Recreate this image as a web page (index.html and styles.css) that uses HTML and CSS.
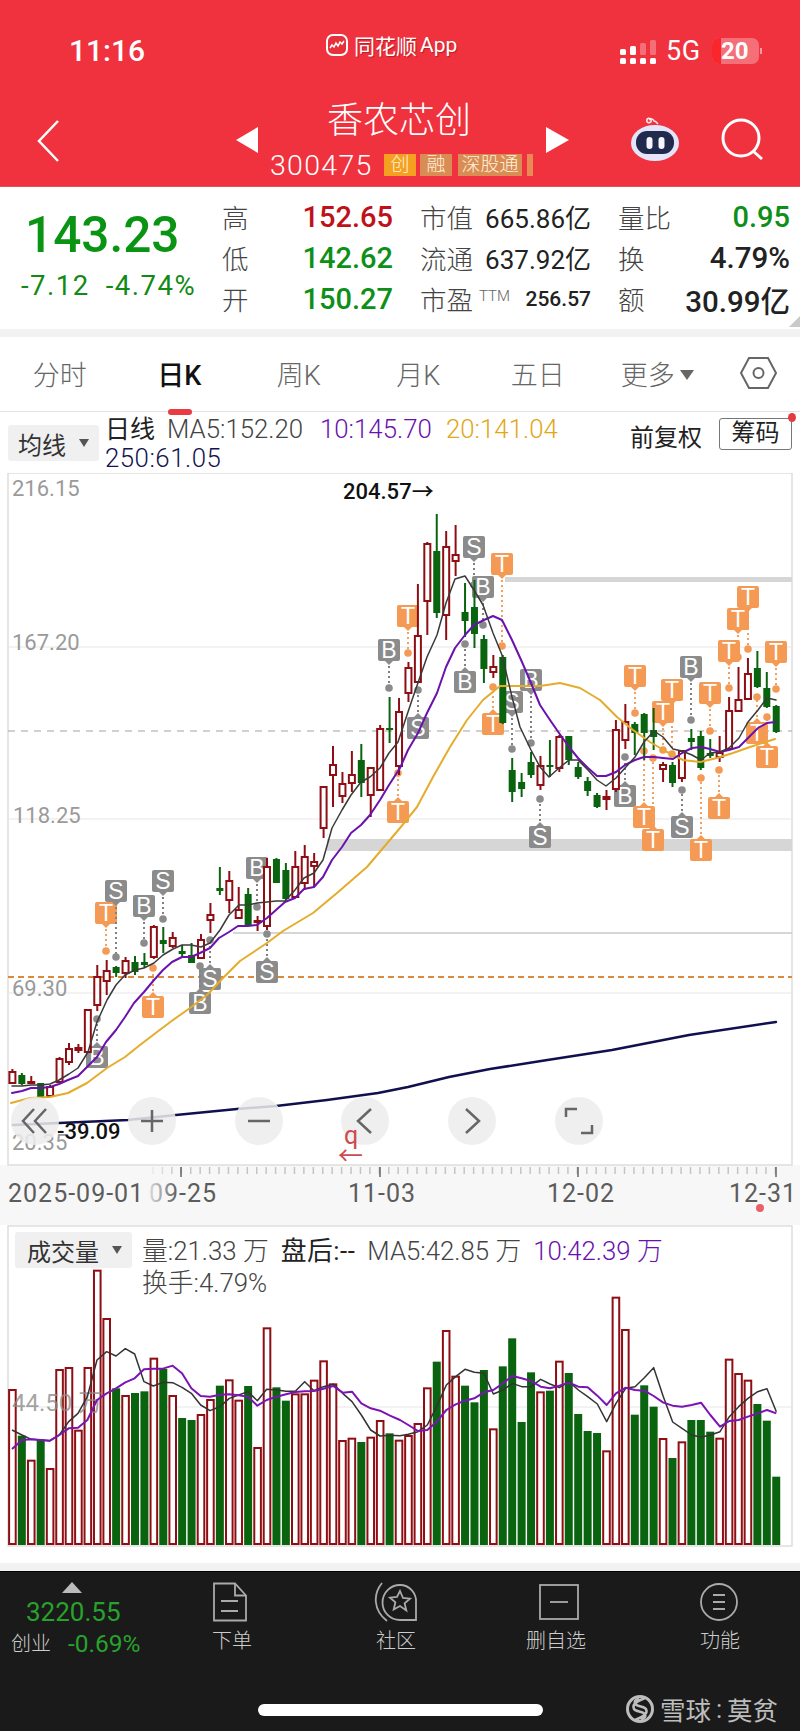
FILE: index.html
```html
<!DOCTYPE html>
<html lang="zh-CN">
<head>
<meta charset="utf-8">
<title>香农芯创</title>
<link rel="stylesheet" href="styles.css">
</head>
<body>
<div class="screen">
  <header class="top">
    <div class="status">
      <div class="time">11:16</div>
      <div class="app">
        <svg class="app-logo" width="22" height="22" viewBox="0 0 22 22"><rect x="1" y="1" width="20" height="20" rx="6" class="logo-box"/><path d="M4 14l2-3 2 2 2-4 2 3 2-4 2 2 2-3" class="logo-wave"/></svg>
        <span>同花顺</span><span class="app-en">App</span>
      </div>
      <div class="sys">
        <svg width="38" height="28" viewBox="0 0 38 28"><g class="sig"><rect x="0" y="12" width="6" height="6" rx="1.5"/><rect x="10" y="9" width="6" height="9" rx="1.5"/><rect class="faint" x="20" y="6" width="6" height="12" rx="1.5"/><rect class="faint" x="30" y="3" width="6" height="15" rx="1.5"/><rect x="0" y="21" width="6" height="6" rx="1.5"/><rect x="10" y="21" width="6" height="6" rx="1.5"/><rect x="20" y="21" width="6" height="6" rx="1.5"/><rect x="30" y="21" width="6" height="6" rx="1.5"/></g></svg>
        <span class="net">5G</span>
        <div class="batt"><span class="batt-low"></span><span class="batt-num">20</span></div>
        <span class="batt-nub"></span>
      </div>
    </div>
    <nav class="nav">
      <div class="back"><svg width="24" height="42" viewBox="0 0 24 42"><path d="M21 1L2 21l19 20" class="thin"/></svg></div>
      <div class="stock">
        <span class="tri-l"></span>
        <div class="stock-mid">
          <div class="title">香农芯创</div>
          <div class="code-row">
            <span class="code">300475</span>
            <span class="tag tag-a">创</span>
            <span class="tag tag-b">融</span>
            <span class="tag tag-b tag-w">深股通</span>
            <span class="tag-end"></span>
          </div>
        </div>
        <span class="tri-r"></span>
      </div>
      <svg class="robot" width="52" height="46" viewBox="0 0 52 46">
        <path d="M20 3a3 3 0 0 1 5 1c2 0 3 2 4 3" class="ant"/>
        <ellipse cx="26" cy="26" rx="24" ry="18" class="head"/>
        <circle cx="20" cy="3.500" r="2.200" class="antd"/>
        <rect x="7" y="14" width="38" height="23" rx="11" class="face"/>
        <rect x="17.500" y="20" width="6" height="12" rx="3" class="eye"/>
        <rect x="29.500" y="20" width="6" height="12" rx="3" class="eye"/>
      </svg>
      <svg class="search" width="44" height="44" viewBox="0 0 44 44"><circle cx="20" cy="20" r="18" class="thick"/><path d="M32 33l9 8" class="thick"/></svg>
    </nav>
  </header>

  <section class="quote">
    <div class="last">
      <div class="price">143.23</div>
      <div class="chg"><span>-7.12</span><span>-4.74%</span></div>
    </div>
    <div class="stats">
      <div class="cell"><span class="lab">高</span><span class="v1 up">152.65</span></div>
      <div class="cell"><span class="lab">市值</span><span class="v2">665.86亿</span></div>
      <div class="cell"><span class="lab">量比</span><span class="v1 dn">0.95</span></div>
      <div class="cell"><span class="lab">低</span><span class="v1 dn">142.62</span></div>
      <div class="cell"><span class="lab">流通</span><span class="v2">637.92亿</span></div>
      <div class="cell"><span class="lab">换</span><span class="v3">4.79%</span></div>
      <div class="cell"><span class="lab">开</span><span class="v1 dn">150.27</span></div>
      <div class="cell"><span class="lab">市盈<sup class="ttm">TTM</sup></span><span class="v4">256.57</span></div>
      <div class="cell"><span class="lab">额</span><span class="v3">30.99亿</span></div>
    </div>
    <span class="corner"></span>
  </section>
  <div class="gap"></div>

  <div class="tabs">
    <span class="tab">分时</span>
    <span class="tab on">日K</span>
    <span class="tab">周K</span>
    <span class="tab">月K</span>
    <span class="tab">五日</span>
    <span class="tab">更多<i class="more"></i></span>
    <svg class="hex" width="37" height="32" viewBox="0 0 37 32"><path d="M9 1h19l8 15-8 15H9L1 16z" class="hexp"/><circle cx="18.500" cy="16" r="5" class="hexp"/></svg>
  </div>

  <div class="chart-head">
    <div class="pill"><span>均线</span><i class="caret"></i></div>
    <div class="legend">
      <div class="leg-row"><span class="leg-name">日线</span><span class="c5">MA5:152.20</span><span class="c10">10:145.70</span><span class="c20">20:141.04</span></div>
      <div class="leg-row"><span class="c250">250:61.05</span></div>
    </div>
    <div class="adj">前复权</div>
    <div class="chip">筹码</div>
    <span class="chip-dot"></span>
  </div>

  <svg id="kline" class="kline" width="800" height="752" viewBox="0 473 800 752"></svg>

  <section class="vol">
    <svg id="volume" class="volsvg" width="800" height="338" viewBox="0 1225 800 338"></svg>
    <div class="vol-head">
      <div class="pill pill-v"><span>成交量</span><i class="caret"></i></div>
      <div class="vol-legend">
        <div class="vol-row"><span>量:21.33 万</span><span class="vol-k">盘后:--</span><span>MA5:42.85 万</span><span class="c10">10:42.39 万</span></div>
        <div class="vol-row"><span>换手:4.79%</span></div>
      </div>
    </div>
  </section>
  <div class="gap"></div>

  <footer class="dock">
    <div class="dock-row">
      <div class="index">
        <span class="index-up"></span>
        <div class="index-val">3220.55</div>
        <div class="index-sub"><span>创业</span><span class="index-chg">-0.69%</span></div>
      </div>
      <div class="dk d1">
        <svg width="36" height="40" viewBox="0 0 36 40"><path d="M2 1.500h21l11 12V38.500H2z" class="ic"/><path d="M23 1.500v12h11M9 19h17M9 29h17" class="ic"/></svg>
        <span>下单</span>
      </div>
      <div class="dk d2">
        <svg width="44" height="40" viewBox="0 0 44 40"><path d="M8 1C-1 12-1 28 13 39" class="ic"/><path d="M26 3a16 16 0 0 1 16 17v18H26a17.500 17.500 0 0 1 0-35z" class="ic"/><path d="M26 9l3 7 7 .6-5.400 4.700 1.700 7.200L26 24l-6.300 3.500 1.700-7.200L16 15.600l7-.6z" class="ic"/></svg>
        <span>社区</span>
      </div>
      <div class="dk d3">
        <svg width="40" height="40" viewBox="0 0 40 40"><rect x="1" y="3" width="38" height="34" class="ic"/><path d="M11 20h18" class="ic"/></svg>
        <span>删自选</span>
      </div>
      <div class="dk d4">
        <svg width="40" height="40" viewBox="0 0 40 40"><circle cx="20" cy="20" r="18" class="ic"/><path d="M14 13h12M14 20h12M14 27h12" class="ic"/></svg>
        <span>功能</span>
      </div>
    </div>
    <div class="home"></div>
    <div class="mark">
      <svg width="30" height="30" viewBox="0 0 30 30"><circle cx="15" cy="15" r="12.500" class="mk"/><path d="M20 4C10 8 7 11 9 15c2 3 8 2 11 5 1 2 0 4-4 6M10 26c10-4 13-7 11-11-2-3-8-2-11-5-1-2 0-4 4-6" class="mk2"/></svg>
      <span>雪球</span><span class="mark-c">:</span><span>莫贫</span>
    </div>
  </footer>
</div>
<script src="app.js"></script>
</body>
</html>
```

FILE: styles.css
```css
* { box-sizing: border-box; }
html, body { margin: 0; padding: 0; background: #fff; }
body { width: 800px; height: 1731px; overflow: hidden; }
.screen {
  width: 800px; height: 1731px; position: relative; overflow: hidden;
  font-family: Roboto, "Noto Sans CJK SC", sans-serif; color: #222;
}
i { font-style: normal; display: inline-block; }

/* header */
.top { height: 187px; background: #ef323e; color: #fff; border-bottom: 1px solid #d9565c; }
.status { height: 102px; display: grid; grid-template-columns: 326px 294px 1fr; align-items: center; }
.time { padding: 0 0 2px 69px; font-size: 30px; font-weight: 500; }
.app { display: flex; align-items: center; font-size: 21px; padding-bottom: 12px; text-shadow: 1px 1px 1px rgba(120,0,0,.45); }
.app-logo { margin-right: 6px; }
.app-en { margin-left: 3px; }
.logo-box { fill: #e8303a; stroke: #fff; stroke-width: 2; }
.logo-wave { fill: none; stroke: #fff; stroke-width: 1.500; }
.sys { display: flex; align-items: center; }
.sig rect { fill: #fff; }
.sig .faint { fill: rgba(255,255,255,.3); }
.net { font-size: 27px; margin-left: 8px; letter-spacing: .6px; }
.batt { width: 47px; height: 26px; margin-left: 11px; display: flex; align-items: center; background: rgba(255,255,255,.3); border-radius: 7px; overflow: hidden; }
.batt-low { width: 9px; height: 26px; background: #f9262c; }
.batt-num { font-size: 24px; font-weight: 700; width: 28px; text-align: center; }
.batt-nub { width: 2px; height: 6px; margin-left: 1px; background: rgba(255,255,255,.5); }

.nav { height: 84px; display: flex; align-items: flex-start; }
.back { padding: 18px 0 0 37px; width: 236px; }
.thin { fill: none; stroke: #fff; stroke-width: 2.500; }
.stock { width: 333px; display: flex; }
.tri-l { width: 0; height: 0; margin-top: 25px; border-style: solid; border-width: 13px 22px 13px 0; border-color: transparent #fff transparent transparent; }
.tri-r { width: 0; height: 0; margin-top: 25px; border-style: solid; border-width: 13px 0 13px 23px; border-color: transparent transparent transparent #fff; }
.stock-mid { flex: 1; }
.title { font-size: 36px; line-height: 34px; padding-top: 2px; height: 36px; text-align: center; margin-left: -6px; font-weight: 300; }
.code-row { display: flex; align-items: center; height: 22px; margin: 16px 0 0 12px; }
.code { font-size: 28.500px; letter-spacing: 1.300px; font-weight: 300; width: 102px; margin-right: 12px; white-space: nowrap; }
.tag { height: 22px; width: 32px; font-size: 19px; line-height: 22px; text-align: center; color: #fff2dc; margin-right: 4px; font-weight: 300; white-space: nowrap; }
.tag-a { background: #f5a020; }
.tag-b { background: #d98d55; margin-right: 6px; }
.tag-w { width: 64px; margin-right: 5px; }
.tag-end { width: 6px; height: 22px; background: #e98a55; }
.robot { margin: 15px 0 0 60px; }
.head { fill: #e4e4fa; }
.ant { fill: none; stroke: #f3e6ea; stroke-width: 1.500; }
.antd { fill: none; stroke: #f6ecec; stroke-width: 1.500; }
.face { fill: #1f2a4d; }
.eye { fill: #f4f6ff; }
.search { margin: 16px 0 0 40px; }
.thick { fill: none; stroke: #fff; stroke-width: 3; }

/* quote */
.quote { height: 142px; display: flex; position: relative; background: #fff; }
.last { width: 222px; padding: 24px 0 0 22px; flex: none; }
.price { font-size: 49.500px; line-height: 48px; color: #0a9414; margin-left: 3px; font-weight: 500; }
.chg { display: flex; gap: 16px; font-size: 27.500px; line-height: 32px; margin-top: 11px; color: #128a16; letter-spacing: 1.500px; white-space: nowrap; margin-left: -1px; }
.stats { width: 570px; padding-top: 9px; display: grid; grid-template-columns: 171px 171px 172px; column-gap: 27px; grid-auto-rows: 41px; }
.cell { display: flex; justify-content: space-between; align-items: center; }
.lab { font-size: 26.500px; color: #444; font-weight: 300; white-space: nowrap; }
.ttm { font-size: 15px; color: #666; margin-left: 6px; vertical-align: 9px; line-height: 0; }
.v1 { font-size: 29px; font-weight: 500; }
.v2 { font-size: 26px; font-weight: 400; color: #222; }
.v3 { font-size: 29.500px; font-weight: 500; color: #222; }
.v4 { font-size: 21px; font-weight: 500; color: #222; }
.up { color: #c0101a; }
.dn { color: #0d8f18; }
.corner { position: absolute; right: 0; bottom: 2px; width: 0; height: 0; border-style: solid; border-width: 0 0 11px 11px; border-color: transparent transparent #c9c9c9 transparent; }
.gap { height: 8px; background: #f2f2f2; }

/* tabs */
.tabs { height: 75px; display: grid; grid-template-columns: repeat(6, 119.500px) 1fr; align-items: center; border-bottom: 1px solid #e3e3e3; position: relative; padding-bottom: 2px; }
.tab { text-align: center; font-size: 27px; color: #666; font-weight: 300; white-space: nowrap; position: relative; }
.tab.on { color: #111; font-weight: 500; }
.tab.on::after { content: ""; position: absolute; left: 48px; right: 47px; bottom: -22px; height: 6px; border-radius: 3px; background: #ea3a42; }
.more { width: 0; height: 0; margin-left: 5px; vertical-align: 5px; border-style: solid; border-width: 10px 7px 0 7px; border-color: #666 transparent transparent transparent; }
.hex { justify-self: center; }
.hexp { fill: none; stroke: #666; stroke-width: 2; }

/* chart header */
.chart-head { height: 61px; display: flex; align-items: flex-start; position: relative; }
.pill { margin: 13px 0 0 8px; width: 91px; height: 36px; background: #f0f0f0; border-radius: 3px; display: flex; align-items: center; padding-left: 10px; font-size: 24px; color: #333; flex: none; }
.caret { width: 0; height: 0; margin-left: 13px; border-style: solid; border-width: 8px 5px 0 5px; border-color: #555 transparent transparent transparent; }
.legend { width: 525px; margin-left: 6px; padding-top: 3px; font-size: 25.800px; line-height: 29px; font-weight: 300; }
.leg-row { display: flex; white-space: nowrap; }
.leg-name { font-size: 25px; width: 62px; color: #222; font-weight: 400; }
.c5 { color: #444; width: 153px; }
.c10 { color: #6a12ad; width: 126px; }
.c20 { color: #e2a716; }
.c250 { color: #12124f; letter-spacing: .5px; }
.adj { font-size: 24px; margin-top: 6px; width: 89px; color: #222; }
.chip { margin-top: 6px; width: 73px; height: 32px; border: 1.500px solid #777; border-radius: 3px; font-size: 24px; line-height: 28px; text-align: center; color: #222; }
.chip-dot { position: absolute; right: 4px; top: 1px; width: 8px; height: 9px; border-radius: 50%; background: #e23b44; }

/* k-line */
.kline, .volsvg { display: block; }
.grid { stroke: #e6e6e6; stroke-width: 1; }
.frame { fill: none; stroke: #dedede; stroke-width: 1.500; }
.band { fill: #d6d6d6; }
.res { stroke: #c9c9c9; stroke-width: 1.500; }
.dash-g { stroke: #a8a096; stroke-width: 1; stroke-dasharray: 7 6; }
.dash-o { stroke: #d98a3d; stroke-width: 2; stroke-dasharray: 6 4; }
.axis { font-size: 22px; fill: #9a9a9a; }
.peak { font-size: 22px; fill: #111; font-weight: 500; }
.low { font-size: 22px; fill: #111; font-weight: 500; }
.rq { font-size: 25px; fill: #cf4a4f; }
.wick-r, .wick-g { stroke-width: 2; }
.wick-r { stroke: #8e0e14; }
.wick-g { stroke: #0a640f; }
.body-r { fill: #fff; stroke: #8e0e14; stroke-width: 2; }
.body-g { fill: #0a640f; }
.ma { fill: none; stroke-linejoin: round; stroke-linecap: round; }
.ma5 { stroke: #3a3a3a; stroke-width: 1.500; }
.ma10 { stroke: #6a12ad; stroke-width: 2; }
.ma20 { stroke: #e5ac2c; stroke-width: 2; }
.ma250 { stroke: #10104f; stroke-width: 2.500; }
.mk-g { fill: #8b8b8b; }
.mk-o { fill: #f49a55; }
.ln-g { stroke: #808080; stroke-width: 2; stroke-dasharray: 2 3; }
.ln-o { stroke: #f3a060; stroke-width: 2; stroke-dasharray: 2 3; }
.mk-t { font-size: 23px; fill: #fff; text-anchor: middle; font-family: "Liberation Sans", sans-serif; }
.btn { fill: rgba(236,236,236,.86); }
.btn-i { fill: none; stroke: #666; stroke-width: 2.500; }
.dateband { fill: #f7f7f7; }
.tick { stroke: #c4c4c4; stroke-width: 1.500; }
.tick-b { stroke: #666; stroke-width: 1.500; }
.date { font-size: 25px; fill: #5c5c5c; letter-spacing: 1px; }
.dot-r { fill: #e8606a; }
.fade-s0 { stop-color: #f7f7f7; stop-opacity: .85; }
.fade-s1 { stop-color: #f7f7f7; stop-opacity: 0; }

/* volume */
.vol { height: 338px; position: relative; }
.vol-head { position: absolute; left: 15px; top: 7px; display: flex; }
.pill-v { margin: 0; width: 117px; padding-left: 12px; font-size: 24px; }
.vol-legend { margin-left: 10px; padding-top: 3px; font-size: 25.800px; line-height: 32px; color: #444; font-weight: 300; }
.vol-row { display: flex; white-space: nowrap; }
.vol-row span { margin-right: 12px; }
.vol-k { font-weight: 400; color: #222; letter-spacing: .5px; }
.bar-r { fill: #fff; stroke: #8e0e14; stroke-width: 2; }
.bar-g { fill: #0a640f; }
.v-ma5 { stroke: #333; stroke-width: 1.500; fill: none; stroke-linejoin: round; }
.v-ma10 { stroke: #7a14b5; stroke-width: 2; fill: none; stroke-linejoin: round; }
.v-label { font-size: 24px; fill: #8c8c8c; fill-opacity: .8; }

/* dock */
.dock { height: 160px; background: #1a1a1a; border-top: 1px solid #000; position: relative; color: #ccc; }
.dock-row { display: flex; height: 130px; position: relative; }
.index { width: 150px; padding-left: 11px; flex: none; position: relative; }
.index-up { display: block; width: 0; height: 0; margin: 10px 0 0 51px; border-style: solid; border-width: 0 10px 11px 10px; border-color: transparent transparent #bbb transparent; }
.index-val { font-size: 26px; line-height: 36px; color: #27a32c; margin: 1px 0 0 15px; }
.index-sub { display: flex; align-items: center; font-size: 20px; margin-top: -2px; font-weight: 300; line-height: 32px; white-space: nowrap; }
.index-chg { font-size: 24.500px; margin-left: 17px; color: #27a32c; font-weight: 400; }
.dk { display: flex; flex-direction: column; align-items: center; font-size: 20px; font-weight: 300; padding-top: 10px; flex: none; width: 100px; line-height: 30px; }
.dk svg { display: block; margin-bottom: 4px; }
.d1 { margin-left: 32px; }
.d1 svg { margin-right: 4px; }
.d2 { margin-left: 64px; }
.d3 { margin-left: 60px; }
.d3 svg { margin-left: 5px; }
.d4 { margin-left: 64px; }
.d4 svg { margin-right: 2px; }
.ic { fill: none; stroke: #aaa; stroke-width: 1.800; }
.home { position: absolute; left: 258px; top: 132px; width: 285px; height: 12px; border-radius: 6px; background: #fff; }
.mark { position: absolute; left: 625px; top: 118px; display: flex; align-items: center; font-size: 25.500px; color: #bdbdbd; }
.mark svg { margin-right: 5px; }
.mark-c { width: 16px; text-align: center; }
.mk { fill: none; stroke: #bdbdbd; stroke-width: 3; }
.mk2 { fill: none; stroke: #bdbdbd; stroke-width: 2.500; }
```

FILE: app.js
```js
(function () {
  var NS = 'http://www.w3.org/2000/svg';
  function el(parent, tag, attrs, text) {
    var n = document.createElementNS(NS, tag);
    for (var k in attrs) n.setAttribute(k, attrs[k]);
    if (text !== undefined) n.textContent = text;
    parent.appendChild(n);
    return n;
  }
  function X(i) { return 12.4 + 9.43 * i; }
  function line(p, x1, y1, x2, y2, c) { el(p, 'line', { x1: x1, y1: y1, x2: x2, y2: y2, 'class': c }); }
  function txt(p, x, y, c, s) { el(p, 'text', { x: x, y: y, 'class': c }, s); }
  function poly(p, pts, c) { el(p, 'polyline', { points: pts.map(function (q) { return q.join(','); }).join(' '), 'class': c }); }

  /* ---------- k-line ---------- */
  var k = document.getElementById('kline');
  var defs = el(k, 'defs', {});
  var grad = el(defs, 'linearGradient', { id: 'axisFade', x1: 0, y1: 0, x2: 1, y2: 0 });
  el(grad, 'stop', { offset: 0, 'class': 'fade-s0' });
  el(grad, 'stop', { offset: 1, 'class': 'fade-s1' });
  el(k, 'rect', { x: 0, y: 1165, width: 800, height: 60, 'class': 'dateband' });
  el(k, 'rect', { x: 8, y: 473, width: 784, height: 692, 'class': 'frame' });
  [647, 819, 993].forEach(function (y) { line(k, 8, y, 792, y, 'grid'); });
  line(k, 233, 933, 792, 933, 'res');
  el(k, 'rect', { x: 505, y: 577, width: 287, height: 5, 'class': 'band' });
  el(k, 'rect', { x: 327, y: 839, width: 465, height: 12, 'class': 'band' });
  line(k, 8, 731, 792, 731, 'dash-g');
  line(k, 8, 977, 792, 977, 'dash-o');

  [['216.15', 12, 496], ['167.20', 12, 650], ['118.25', 13, 823], ['69.30', 12, 996], ['20.35', 12, 1150]].forEach(function (a) {
    txt(k, a[1], a[2], 'axis', a[0]);
  });
  txt(k, 343, 499, 'peak', '204.57→');

  var marks = [
    ['T',106,913,951],['S',116,891,957],['B',144,906,943],['S',163,881,919],['B',257,868,907],
    ['S',267,972,934],['S',210,979,940],['B',200,1003,966],['T',153,1007,968],['B',97,1057,1019],
    ['T',398,812,773],['B',389,650,688],['T',408,616,653],['S',474,547,585],['T',502,564,646],
    ['B',483,587,625],['B',465,682,644],['T',493,724,687],['S',418,728,690],['S',512,702,749],
    ['B',531,680,743],['S',540,837,799],['T',635,676,713],['T',672,690,754],['T',663,712,750],
    ['T',710,693,731],['B',691,667,720],['T',748,597,649],['T',738,619,657],['T',729,651,688],
    ['T',776,652,689],['T',757,733,697],['T',767,757,717],['B',625,796,757],['T',644,817,751],
    ['T',653,840,758],['S',682,827,790],['T',701,850,778],['T',719,808,770]
  ];
  marks.forEach(function (m) {
    var t = m[0], x = m[1], y = m[2], d = m[3], o = t === 'T';
    var fill = o ? 'mk-o' : 'mk-g', ln = o ? 'ln-o' : 'ln-g', dir = d > y ? 1 : -1;
    line(k, x, y + dir * 11, x, d, ln);
    el(k, 'circle', { cx: x, cy: d, r: 3.8, 'class': fill });
    el(k, 'rect', { x: x - 11, y: y - 11, width: 22, height: 22, rx: 2, 'class': fill });
    el(k, 'path', { d: 'M' + (x - 4) + ' ' + (y + dir * 11) + 'L' + x + ' ' + (y + dir * 15) + 'L' + (x + 4) + ' ' + (y + dir * 11) + 'z', 'class': fill });
    txt(k, x, y + 8, 'mk-t', t);
  });

  /* hi, top, bottom, lo, colour */
  var c = [
    [1069,1072,1083,1084,'r'],[1073,1075,1084,1085,'g'],[1076,1082,1083,1083,'r'],[1083,1083,1097,1098,'g'],
    [1085,1087,1096,1097,'r'],[1057,1059,1082,1083,'r'],[1043,1049,1062,1065,'r'],[1044,1048,1050,1053,'r'],
    [1009,1010,1052,1053,'r'],[965,977,1005,1011,'r'],[960,971,981,995,'r'],[966,967,973,977,'g'],
    [957,961,973,978,'r'],[956,962,972,975,'g'],[953,962,965,968,'g'],[925,927,957,959,'r'],
    [927,940,944,953,'g'],[932,938,946,948,'r'],[945,951,954,957,'g'],[943,955,963,963,'g'],
    [934,940,958,959,'r'],[903,915,920,933,'r'],[867,888,891,895,'g'],[871,881,900,913,'r'],
    [887,910,918,919,'r'],[888,894,925,926,'g'],[916,921,922,931,'r'],[858,867,926,930,'r'],
    [858,859,883,883,'g'],[863,870,899,900,'g'],[851,867,897,898,'r'],[845,857,883,890,'r'],
    [853,862,866,887,'r'],[787,787,828,838,'r'],[746,765,775,807,'r'],[772,784,796,803,'r'],
    [751,775,783,792,'r'],[744,760,783,797,'g'],[768,768,795,817,'r'],[725,729,790,791,'r'],
    [697,728,730,743,'g'],[698,712,766,775,'r'],[662,668,693,702,'r'],[584,636,682,683,'r'],
    [542,544,601,635,'r'],[514,551,613,618,'g'],[531,547,615,640,'r'],[525,555,561,576,'r'],
    [583,612,621,637,'g'],[580,607,634,648,'g'],[635,639,669,683,'g'],[655,667,672,678,'r'],
    [655,657,723,724,'g'],[758,770,792,802,'g'],[773,782,789,797,'g'],[752,762,775,778,'g'],
    [756,766,785,790,'r'],[740,765,767,777,'g'],[735,737,768,772,'r'],[736,736,760,765,'g'],
    [762,767,777,779,'g'],[777,781,791,796,'g'],[793,795,807,808,'g'],[790,797,799,810,'r'],
    [720,730,789,792,'r'],[704,722,740,749,'r'],[722,724,733,755,'g'],[713,714,733,760,'g'],
    [708,730,737,750,'g'],[762,765,769,782,'r'],[762,765,783,787,'g'],[750,751,778,782,'r'],
    [729,738,742,750,'g'],[731,736,768,770,'g'],[739,753,756,758,'g'],[736,753,757,762,'r'],
    [697,711,749,750,'r'],[667,700,711,711,'r'],[658,674,699,700,'r'],[651,668,687,688,'g'],
    [672,688,707,708,'g'],[705,706,732,733,'g']
  ];
  c.forEach(function (d, i) {
    var x = X(i);
    line(k, x, d[0], x, d[3], 'wick-' + d[4]);
    if (d[4] === 'r') {
      el(k, 'rect', { x: x - 3, y: d[1], width: 6, height: Math.max(d[2] - d[1], 1), 'class': 'body-r' });
    } else {
      el(k, 'rect', { x: x - 3.5, y: d[1], width: 7, height: Math.max(d[2] - d[1], 2), 'class': 'body-g' });
    }
  });

  var ma20 = [[11,1103],[30,1098],[50,1097],[68,1093],[87,1083],[107,1068],[125,1057],[140,1045],[157,1032],[173,1020],[190,1008],[207,995],[223,978],[240,961],[267,943],[283,931],[313,913],[337,893],[367,867],[400,828],[417,807],[433,777],[450,747],[467,720],[483,700],[500,686],[520,686],[540,686],[560,683],[580,688],[600,700],[617,717],[633,730],[650,742],[667,752],[683,760],[700,762],[717,758],[733,753],[750,747],[775,739]];
  var ma10 = [[12,1093],[22,1091],[31,1088],[41,1088],[50,1087],[59,1084],[68,1080],[78,1076],[87,1067],[97,1057],[106,1042],[116,1030],[125,1017],[134,1003],[144,992],[154,980],[163,970],[172,962],[182,957],[191,957],[200,953],[210,948],[219,938],[229,932],[238,926],[248,926],[257,925],[267,918],[276,910],[285,902],[295,898],[304,889],[314,887],[323,877],[332,860],[342,847],[351,833],[361,825],[370,815],[380,800],[389,785],[400,768],[408,750],[418,733],[427,713],[437,693],[446,667],[455,648],[465,635],[474,625],[484,620],[493,616],[502,620],[512,640],[522,662],[531,683],[540,705],[550,720],[559,733],[569,747],[578,758],[588,768],[597,776],[606,776],[616,772],[625,765],[635,760],[644,757],[654,757],[663,758],[673,759],[682,753],[692,748],[701,747],[710,749],[720,752],[729,750],[739,747],[748,738],[758,728],[767,723],[775,722]];
  var ma5 = [[12,1086],[22,1086],[31,1085],[41,1085],[50,1084],[59,1080],[69,1074],[78,1068],[88,1052],[97,1022],[107,1000],[116,985],[125,975],[135,970],[144,968],[154,963],[163,955],[173,949],[182,945],[191,945],[201,947],[210,943],[220,930],[229,915],[239,905],[248,905],[257,903],[267,902],[276,901],[285,901],[295,890],[304,878],[314,873],[323,860],[332,828],[342,810],[351,795],[361,782],[370,777],[380,768],[389,753],[398,742],[412,700],[427,657],[437,635],[446,603],[455,579],[465,576],[474,590],[483,605],[493,633],[502,655],[512,697],[520,727],[531,750],[540,767],[549,777],[559,768],[569,760],[578,760],[588,770],[597,780],[606,786],[616,778],[625,768],[635,757],[644,742],[654,731],[663,737],[673,749],[682,751],[692,755],[701,760],[710,753],[720,752],[729,748],[739,738],[748,722],[758,710],[767,698],[776,700]];
  var ma250 = [[13,1125],[59,1123],[128,1120],[176,1115],[237,1109],[276,1106],[327,1100],[378,1093],[408,1087],[449,1077],[490,1069],[541,1061],[612,1050],[689,1035],[776,1022]];
  poly(k, ma20, 'ma ma20');
  poly(k, ma250, 'ma ma250');
  poly(k, ma10, 'ma ma10');
  poly(k, ma5, 'ma ma5');

  /* pan and zoom buttons */
  [35, 152, 259, 365, 472, 579].forEach(function (x) {
    el(k, 'circle', { cx: x, cy: 1121, r: 24, 'class': 'btn' });
  });
  [
    'M34 1109L23 1121L34 1133M46 1109L35 1121L46 1133',
    'M141 1121H163M152 1110V1132',
    'M248 1121H270',
    'M371 1109L358 1121L371 1133',
    'M466 1109L479 1121L466 1133',
    'M566 1117V1109H577M592 1125V1133H581'
  ].forEach(function (d) { el(k, 'path', { d: d, 'class': 'btn-i' }); });
  txt(k, 57, 1139, 'low', '-39.09');
  txt(k, 344, 1144, 'rq', 'q');
  txt(k, 338, 1165, 'rq', '←');

  /* date axis */
  for (var tx = 153; tx < 777; tx += 9.43) line(k, tx, 1167, tx, 1174, 'tick');
  [181, 380, 578, 776].forEach(function (x) { line(k, x, 1167, x, 1177, 'tick-b'); });
  [['2025-09-01', 8], ['09-25', 149], ['11-03', 348], ['12-02', 547], ['12-31', 729]].forEach(function (a) {
    txt(k, a[1], 1202, 'date', a[0]);
  });
  el(k, 'rect', { x: 148, y: 1166, width: 30, height: 44, fill: 'url(#axisFade)' });
  el(k, 'circle', { cx: 760, cy: 1208, r: 4, 'class': 'dot-r' });

  /* ---------- volume ---------- */
  var v = document.getElementById('volume');
  el(v, 'rect', { x: 8, y: 1226, width: 784, height: 320, 'class': 'frame' });
  line(v, 8, 1407, 792, 1407, 'grid');
  var bars = 'r420 g560 r632 g572 r657 r360 r354 r542 r354 r62 r207 g418 r438 g432 g427 r326 g360 r438 g507 g513 r495 r450 g410 r391 r452 g411 r594 r235 g415 g455 r433 r433 r392 r334 r403 r573 r566 g579 r563 r513 g553 r572 r558 r522 r415 g338 r243 r380 g410 g460 g363 r538 g352 g268 g519 g370 r427 g425 r335 g372 g495 g546 g552 r604 r143 r240 g497 g409 g473 r567 g627 r577 g513 g513 g548 r566 r329 r372 r392 g465 g515 g683'.split(' ');
  bars.forEach(function (b, i) {
    var top = 1250 + parseInt(b.slice(1), 10) / 3, x = X(i), bot = 1544;
    if (b[0] === 'r') el(v, 'rect', { x: x - 3.3, y: top, width: 6.6, height: bot - top, 'class': 'bar-r' });
    else el(v, 'rect', { x: x - 4, y: top - 1, width: 8, height: bot - top + 2, 'class': 'bar-g' });
  });
  txt(v, 12, 1411, 'v-label', '44.50 万');
  function z6(a) { return a.map(function (p) { return [p[0] / 3, 1250 + p[1] / 3]; }); }
  function z7(a) { return a.map(function (p) { return [400 + p[0] / 3, 1250 + p[1] / 3]; }); }
  var vb = z6([[36,540],[66,555],[94,568],[122,570],[150,572],[178,555],[206,515],[234,490],[262,440],[291,330],[320,305],[348,318],[376,296],[404,312],[432,395],[460,408],[489,397],[518,398],[546,412],[574,430],[602,465],[630,482],[660,470],[688,445],[716,435],[744,425],[772,452],[800,418],[830,420],[858,424],[886,424],[914,395],[942,422],[970,410],[1000,403],[1028,430],[1056,455],[1084,495],[1112,540],[1140,558],[1170,556]]).concat(
    z7([[0,557],[25,553],[54,545],[82,525],[110,470],[139,405],[167,380],[195,358],[223,367],[252,370],[280,432],[309,420],[337,400],[365,410],[393,410],[422,388],[450,402],[478,413],[507,395],[535,420],[563,440],[592,462],[620,515],[648,460],[677,415],[705,410],[733,383],[761,353],[790,440],[818,516],[846,535],[875,555],[903,562],[931,555],[960,545],[988,500],[1016,470],[1044,445],[1073,425],[1101,416],[1129,485]]));
  var vp = z6([[36,597],[66,570],[94,568],[122,570],[150,572],[178,555],[206,535],[234,533],[262,510],[291,450],[320,430],[348,415],[376,397],[404,385],[432,358],[460,356],[489,356],[518,347],[546,370],[574,415],[602,438],[630,440],[660,434],[688,433],[716,436],[744,440],[772,467],[800,450],[830,440],[858,433],[886,426],[914,424],[942,423],[970,416],[1000,408],[1028,428],[1056,425],[1084,460],[1112,475],[1140,482],[1170,497]]).concat(
    z7([[0,510],[25,525],[54,543],[82,540],[110,515],[139,480],[167,463],[195,452],[223,445],[252,427],[280,420],[309,400],[337,378],[365,385],[393,393],[422,410],[450,415],[478,407],[507,398],[535,410],[563,412],[592,437],[620,465],[648,430],[677,413],[705,420],[733,422],[761,438],[790,458],[818,467],[846,470],[875,465],[903,458],[931,495],[960,530],[988,513],[1016,510],[1044,500],[1073,490],[1101,480],[1129,490]]));
  poly(v, vb, 'v-ma5');
  poly(v, vp, 'v-ma10');
})();
```
